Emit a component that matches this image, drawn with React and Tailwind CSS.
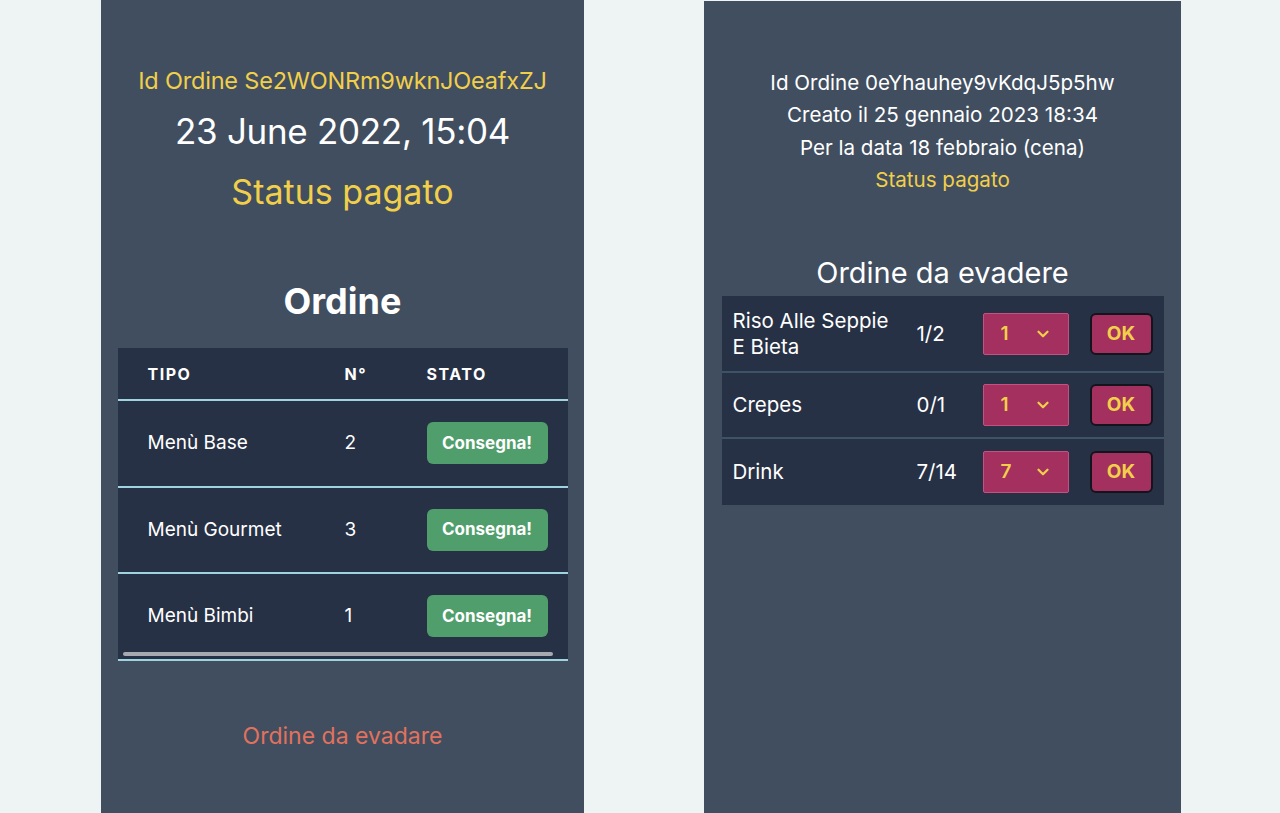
import { ChevronDown } from 'lucide-react';

const menu = [
  { tipo: 'Menù Base', n: 2 },
  { tipo: 'Menù Gourmet', n: 3 },
  { tipo: 'Menù Bimbi', n: 1 },
];

const piatti = [
  { nome: 'Riso Alle Seppie E Bieta', qty: '1/2', sel: 1, tall: true },
  { nome: 'Crepes', qty: '0/1', sel: 1 },
  { nome: 'Drink', qty: '7/14', sel: 7 },
];

export default function App() {
  return (
    <div className="flex h-[813px] w-[1280px] overflow-hidden bg-[#eef4f4] font-['Inter',sans-serif]">
      {/* left phone */}
      <div className="ml-[101px] flex h-full w-[483px] flex-col items-center bg-[#404e5f]">
        <div className="mt-[66px] text-[23.5px] leading-[30px] tracking-[-0.2px] text-[#f2cf4a]">Id Ordine Se2WONRm9wknJOeafxZJ</div>
        <div className="mt-[13px] text-[35px] leading-[44px] tracking-[-0.3px] text-white">23 June 2022, 15:04</div>
        <div className="mt-[18px] text-[34px] leading-[42px] text-[#f2cf4a]">Status pagato</div>
        <h2 className="mt-[66px] text-[36px] font-bold leading-[44px] text-white">Ordine</h2>

        <div className="mt-[25px] w-[450px] bg-[#273145]">
          <div className="flex h-[53px] items-center border-b-2 border-[#9fd3e0] text-[16px] font-bold tracking-[1.5px] text-white">
            <div className="w-[227px] pl-[30px]">TIPO</div>
            <div className="w-[82px]">N°</div>
            <div>STATO</div>
          </div>
          {menu.map((m) => (
            <div key={m.tipo} className="flex h-[86.5px] items-center border-b-2 border-[#9fd3e0] text-[19px] text-white">
              <div className="w-[227px] pl-[30px]">{m.tipo}</div>
              <div className="w-[82px]">{m.n}</div>
              <button className="h-[42px] w-[121px] rounded-[6px] bg-[#509e6b] text-[17px] font-bold text-white">Consegna!</button>
            </div>
          ))}
        </div>
        <div className="relative w-[450px]">
          <div className="absolute left-[5px] top-[-9px] h-[4px] w-[430px] rounded-full bg-[#a8a9b0]" />
        </div>

        <div className="mt-[60px] text-[23px] leading-[30px] text-[#e2725d]">Ordine da evadare</div>
      </div>

      {/* right phone */}
      <div className="ml-[120px] mt-[1px] flex h-full w-[477px] flex-col items-center bg-[#404e5f]">
        <div className="mt-[66px] flex flex-col items-center text-[20.6px] leading-[32.3px] text-white">
          <div>Id Ordine 0eYhauhey9vKdqJ5p5hw</div>
          <div>Creato il 25 gennaio 2023 18:34</div>
          <div>Per la data 18 febbraio (cena)</div>
          <div className="text-[#f2cf4a]">Status pagato</div>
        </div>
        <h2 className="mt-[58px] text-[29px] leading-[38px] text-white">Ordine da evadere</h2>

        <div className="mt-[4px] w-[442px] bg-[#273145]">
          {piatti.map((p, i) => (
            <div key={p.nome} className={`flex items-center border-[#3e5466] ${i < 2 ? 'border-b-2' : ''} ${p.tall ? 'h-[77px]' : 'h-[66px]'} text-[20.5px] leading-[26px] text-white`}>
              <div className="w-[195px] pl-[11px] pr-[20px]">{p.nome}</div>
              <div className="w-[66px]">{p.qty}</div>
              <div className="flex h-[42px] w-[86px] items-center rounded-[2px] border border-[#c6507f] bg-[#a3305f] pl-[17px] text-[19px] font-semibold text-[#f2cf4a]">
                <span className="w-[33px]">{p.sel}</span>
                <ChevronDown size={18} strokeWidth={3} />
              </div>
              <button className="ml-[21px] h-[42px] w-[63px] rounded-[6px] border-2 border-[#14141c] bg-[#a3305f] text-[19px] font-bold text-[#f2cf4a]">OK</button>
            </div>
          ))}
        </div>
      </div>
    </div>
  );
}
